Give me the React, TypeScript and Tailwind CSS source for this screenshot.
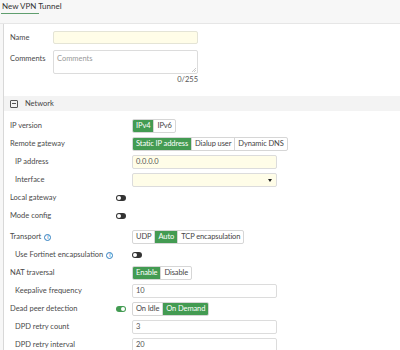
import React from "react";

const GREEN = "bg-[#439b52] text-white border-[#439b52]";

type Opt = { label: string; active?: boolean };

const Segmented: React.FC<{ options: Opt[] }> = ({ options }) => (
  <div className="flex h-[14px] rounded-[2px] border border-[#d6d6d6] bg-white overflow-hidden">
    {options.map((o, i) => (
      <div
        key={o.label}
        className={`flex items-center px-[3px] text-[7.5px] leading-none tracking-[-0.1px] ${
          o.active ? GREEN : "text-[#444]"
        } ${i > 0 ? "border-l border-[#d6d6d6]" : ""}`}
      >
        {o.label}
      </div>
    ))}
  </div>
);

const Toggle: React.FC<{ on?: boolean }> = ({ on }) => (
  <div
    className={`flex items-center w-[10px] h-[6px] rounded-full px-[1px] ${
      on ? "bg-[#439b52] justify-end" : "bg-[#333] justify-start"
    }`}
  >
    <div className="w-[4px] h-[4px] rounded-full bg-white" />
  </div>
);

const Info: React.FC = () => (
  <span className="ml-[3px] inline-flex items-center justify-center w-[7px] h-[7px] rounded-full border border-[#2f7fc1] text-[#2f7fc1] text-[5px] font-bold leading-none">
    i
  </span>
);

const Input: React.FC<{ value?: string; yellow?: boolean; select?: boolean }> = ({
  value,
  yellow,
  select,
}) => (
  <div
    className={`flex items-center justify-between w-[145px] h-[14px] rounded-[2px] border border-[#dcdcdc] px-[3px] text-[7.5px] text-[#555] ${
      yellow ? "bg-[#fffde8]" : "bg-white"
    }`}
  >
    <span>{value}</span>
    {select && (
      <span className="w-0 h-0 border-l-[2.5px] border-r-[2.5px] border-t-[3px] border-l-transparent border-r-transparent border-t-[#222] mr-[1px]" />
    )}
  </div>
);

const Row: React.FC<{
  label: React.ReactNode;
  indent?: boolean;
  toggle?: React.ReactNode;
  children?: React.ReactNode;
}> = ({ label, indent, toggle, children }) => (
  <div className="flex items-center h-[18px]">
    <div
      className={`flex items-center justify-between w-[128px] pr-[6px] text-[7.5px] text-[#4a4a4a] ${
        indent ? "pl-[11px]" : "pl-[6px]"
      }`}
    >
      <span className="flex items-center">{label}</span>
      {toggle}
    </div>
    {children}
  </div>
);

export default function App() {
  return (
    <div className="w-[400px] h-[350px] overflow-hidden bg-[#f7f7f7] font-['Lato','Liberation_Sans',sans-serif]">
      <div className="h-[24px] border-b border-[#e6e6e6]">
        <div className="relative pl-[2px] pt-[2px] text-[8px] text-[#333] leading-[9px]">
          New VPN Tunnel
          <div className="absolute left-[1px] top-[13px] w-[38px] h-[1px] bg-[#5f9e6e]" />
        </div>
      </div>

      <div className="ml-[3px] h-full border-l border-[#d8d8d8] bg-white">
        {/* name + comments */}
        <div className="pt-[7px] pl-[6px] w-[194px]">
          <div className="flex items-center h-[13px]">
            <span className="w-[43px] text-[7.5px] text-[#4a4a4a]">Name</span>
            <div className="flex-1 h-[13px] rounded-[2px] border border-[#e4e4d6] bg-[#fffde8]" />
          </div>
          <div className="flex mt-[6px]">
            <span className="w-[43px] pt-[3px] text-[7.5px] text-[#4a4a4a]">Comments</span>
            <div className="relative flex-1 h-[24px] rounded-[2px] border border-[#dcdcdc] bg-white px-[3px] pt-[2px] text-[7.5px] text-[#999]">
              Comments
              <svg className="absolute right-[1px] bottom-[1px]" width="4" height="4" viewBox="0 0 4 4">
                <path d="M0 4L4 0M2 4L4 2" stroke="#aaa" strokeWidth="0.6" />
              </svg>
            </div>
          </div>
          <div className="text-right text-[7.5px] text-[#555] leading-[8px] mt-[2px]">0/255</div>
        </div>

        {/* network header */}
        <div className="mt-[12px] flex items-center h-[15px] bg-[#f3f3f3] pl-[6px] text-[7.5px] text-[#444]">
          <span className="flex items-center justify-center w-[8px] h-[8px] border border-[#555] rounded-[1px] mr-[7px]">
            <span className="w-[4px] h-[1px] bg-[#555]" />
          </span>
          Network
        </div>

        <div className="pt-[6px]">
          <Row label="IP version">
            <Segmented options={[{ label: "IPv4", active: true }, { label: "IPv6" }]} />
          </Row>
          <Row label="Remote gateway">
            <Segmented
              options={[
                { label: "Static IP address", active: true },
                { label: "Dialup user" },
                { label: "Dynamic DNS" },
              ]}
            />
          </Row>
          <Row label="IP address" indent>
            <Input value="0.0.0.0" yellow />
          </Row>
          <Row label="Interface" indent>
            <Input yellow select />
          </Row>
          <Row label="Local gateway" toggle={<Toggle />} />
          <Row label="Mode config" toggle={<Toggle />} />

          <div className="h-[3px]" />
          <Row
            label={
              <>
                Transport
                <Info />
              </>
            }
          >
            <Segmented
              options={[
                { label: "UDP" },
                { label: "Auto", active: true },
                { label: "TCP encapsulation" },
              ]}
            />
          </Row>
          <Row
            label={
              <>
                Use Fortinet encapsulation
                <Info />
              </>
            }
            indent
          >
            <Toggle />
          </Row>
          <Row label="NAT traversal">
            <Segmented options={[{ label: "Enable", active: true }, { label: "Disable" }]} />
          </Row>
          <Row label="Keepalive frequency" indent>
            <Input value="10" />
          </Row>
          <Row label="Dead peer detection" toggle={<Toggle on />}>
            <Segmented options={[{ label: "On Idle" }, { label: "On Demand", active: true }]} />
          </Row>
          <Row label="DPD retry count" indent>
            <Input value="3" />
          </Row>
          <Row label="DPD retry interval" indent>
            <Input value="20" />
          </Row>
        </div>
      </div>
    </div>
  );
}
